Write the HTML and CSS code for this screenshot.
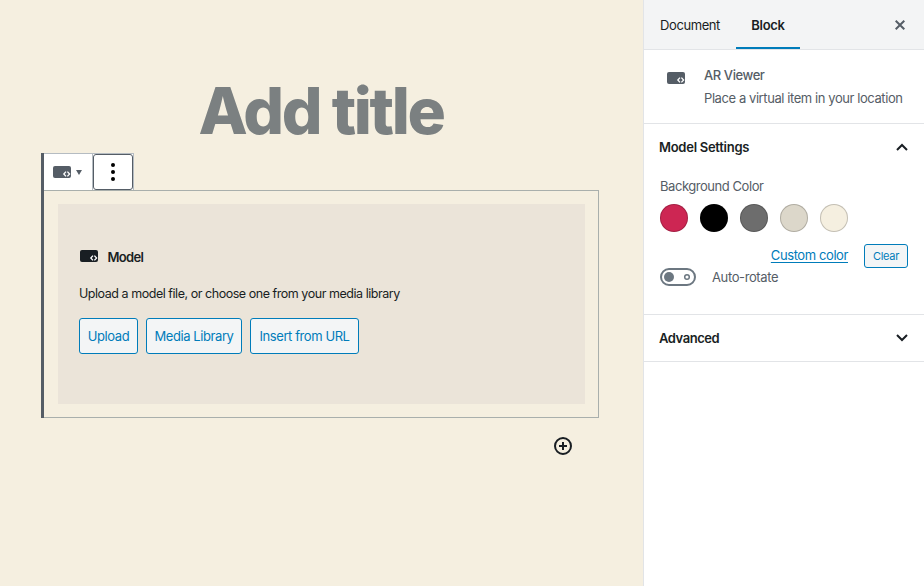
FILE: index.html
```html
<!DOCTYPE html>
<html lang="en">
<head>
<meta charset="utf-8">
<title>Add title</title>
<link rel="stylesheet" href="styles.css">
</head>
<body>
<svg class="defs" aria-hidden="true">
  <symbol id="ar" viewBox="0 0 18 12">
    <rect width="18" height="12" rx="2" fill="currentColor"/>
    <path class="code" d="M13 5.6 10.8 8l2.2 2.4M14.4 5.6 16.6 8l-2.2 2.4"/>
  </symbol>
</svg>
<div class="app">
  <main class="editor">
    <h1 class="title"><span class="t-title">Add title</span></h1>
    <section class="block">
      <div class="toolbar">
        <button class="switcher"><svg class="ar"><use href="#ar"/></svg><svg class="caret" viewBox="0 0 6 5"><path d="M0 0h6L3 5z"/></svg></button>
        <button class="more"><svg viewBox="0 0 4 18"><circle cx="2" cy="2" r="2"/><circle cx="2" cy="9" r="2"/><circle cx="2" cy="16" r="2"/></svg></button>
      </div>
      <div class="frame">
        <div class="placeholder">
          <div class="label"><svg class="ar"><use href="#ar"/></svg><span class="t-model">Model</span></div>
          <p class="help"><span class="t-help">Upload a model file, or choose one from your media library</span></p>
          <div class="actions">
            <button class="btn upload"><span class="t-upload">Upload</span></button>
            <button class="btn library"><span class="t-library">Media Library</span></button>
            <button class="btn url"><span class="t-url">Insert from URL</span></button>
          </div>
        </div>
      </div>
    </section>
    <button class="inserter"><svg viewBox="0 0 18 18"><circle cx="9" cy="9" r="8"/><path d="M9 5v8M5 9h8"/></svg></button>
  </main>
  <aside class="sidebar">
    <header class="tabs">
      <button class="tab"><span class="t-doc">Document</span></button>
      <button class="tab active"><span class="t-block">Block</span></button>
      <button class="close"><svg viewBox="0 0 10 10"><path d="m.7.7 8.6 8.6M9.3.7.7 9.3"/></svg></button>
    </header>
    <section class="card">
      <svg class="ar"><use href="#ar"/></svg>
      <div><div class="name"><span class="t-name">AR Viewer</span></div><div class="desc"><span class="t-desc">Place a virtual item in your location</span></div></div>
    </section>
    <section class="panel settings">
      <h2><span class="t-settings">Model Settings</span><svg class="chevron" viewBox="0 0 12 8"><path d="m1 7 5-5 5 5"/></svg></h2>
      <div class="field"><span class="t-bg">Background Color</span></div>
      <div class="swatches"><i class="c1"></i><i class="c2"></i><i class="c3"></i><i class="c4"></i><i class="c5"></i></div>
      <div class="custom"><a class="t-custom">Custom color</a><button class="clear"><span class="t-clear">Clear</span></button></div>
      <div class="toggle"><svg viewBox="0 0 36 18"><rect x="1" y="1" width="34" height="16" rx="8"/><circle class="knob" cx="9" cy="9" r="5"/><circle class="off" cx="27" cy="9" r="2.3"/></svg><span class="t-auto">Auto-rotate</span></div>
    </section>
    <section class="panel">
      <h2><span class="t-adv">Advanced</span><svg class="chevron" viewBox="0 0 12 8"><path d="m1 1 5 5 5-5"/></svg></h2>
    </section>
  </aside>
</div>
</body>
</html>
```
FILE: styles.css
```css
* { box-sizing: border-box; }
body { margin: 0; font: 13px/18px Inter, "Liberation Sans", sans-serif; color: #191e23; letter-spacing: -0.3px; }
button { font: inherit; letter-spacing: inherit; color: inherit; margin: 0; padding: 0; border: 0; background: none; }
svg { display: block; flex: none; }
span, a { white-space: nowrap; }
.defs { position: absolute; width: 0; height: 0; }
.app { display: flex; height: 586px; overflow: hidden; }
.editor { width: 643px; flex: none; background: #f5efe0; padding-top: 71px; }
.title { margin: 0; height: 82px; font-size: 64px; line-height: 80px; font-weight: 800; color: #7b8081; text-align: center; letter-spacing: -2.4px; padding-right: 1px; }
.block { width: 558px; height: 265px; margin-left: 41px; border-left: 3px solid #555d66; }
.ar { width: 18px; height: 12px; }
.code { fill: none; stroke: #fff; stroke-width: 1.3; }
.toolbar { display: flex; width: 90px; height: 37px; background: #fff; border: 1px solid #b5bcc2; border-width: 1px 1px 0 0; }
.switcher { width: 49px; display: flex; align-items: center; padding-left: 9px; gap: 5px; color: #555d66; border-right: 1px solid #b5bcc2; }
.caret { width: 6px; height: 5px; fill: #555d66; }
.more { width: 40px; height: 36px; border: 1px solid #555d66; border-radius: 3px; display: grid; place-items: center; flex: none; }
.more svg { width: 4px; height: 18px; }
.frame { height: 228px; border: 1px solid #a9afac; border-left: 0; padding: 13px 13px 13px 14px; }
.placeholder { height: 200px; background: #ebe4d9; padding: 43px 21px 0; }
.label { display: flex; align-items: center; gap: 9.5px; height: 20px; padding-left: 1px; font-weight: 600; }
.label .ar { margin-bottom: 2px; }
.t-model { letter-spacing: -0.65px; }
.help { margin: 18px 0 14px; height: 19px; font-size: 12.5px; letter-spacing: -0.46px; }
.actions { display: flex; gap: 8px; }
.btn { height: 36px; border: 1px solid #007cba; border-radius: 3px; color: #007cba; background: #f3f5f6; letter-spacing: -0.42px; }
.upload { width: 59px; }
.library { width: 96px; }
.url { width: 109px; }
.inserter { display: block; margin: 19px 0 0 554px; }
.inserter svg { width: 18px; height: 18px; fill: none; stroke: #191e23; stroke-width: 2; }
.sidebar { flex: 1; background: #fff; border-left: 1px solid #e2e4e7; color: #555d66; }
.tabs { height: 50px; display: flex; background: #f3f4f5; border-bottom: 1px solid #e2e4e7; color: #191e23; }
.tab { width: 92px; height: 49px; padding-top: 0; letter-spacing: -0.42px; }
.tab.active { width: 64px; border-bottom: 2px solid #007cba; padding-top: 2px; font-weight: 600; letter-spacing: -0.3px; }
.close { margin: 20px 19px 0 auto; height: 10px; }
.close svg { width: 10px; height: 10px; fill: none; stroke: #555d66; stroke-width: 2; }
.card { height: 74px; border-bottom: 1px solid #e2e4e7; display: flex; padding: 16px 0 0 23px; }
.card .ar { margin: 6px 19px 0 0; }
.name { height: 23px; font-weight: 500; letter-spacing: -0.42px; }
.desc { letter-spacing: -0.42px; }
.panel { border-bottom: 1px solid #e2e4e7; padding: 0 16px; height: 47px; }
.settings { height: 191px; }
h2 { margin: 0 0 0 -1px; height: 46px; display: flex; align-items: center; justify-content: space-between; font-size: 13px; font-weight: 600; color: #191e23; }
.t-settings { letter-spacing: -0.27px; }
.t-adv { letter-spacing: -0.45px; }
.chevron { width: 12px; height: 8px; fill: none; stroke: #191e23; stroke-width: 2; }
.field { margin-top: 7px; height: 27px; letter-spacing: -0.45px; }
.swatches { display: flex; gap: 12px; }
.swatches i { width: 28px; height: 28px; border-radius: 50%; border: 1px solid rgba(0,0,0,.2); }
.c1 { background: #cd2653; }
.c2 { background: #000; }
.c3 { background: #6d6d6d; }
.c4 { background: #dcd7ca; }
.c5 { background: #f5efe0; }
.custom { margin-top: 12px; height: 24px; display: flex; justify-content: flex-end; gap: 16px; align-items: center; color: #007cba; }
.custom a { text-decoration: underline; text-underline-offset: 2px; letter-spacing: -0.41px; padding-bottom: 2px; }
.clear { width: 44px; height: 24px; border: 1px solid #007cba; border-radius: 3px; background: #f3f5f6; font-size: 11px; line-height: 16px; }
.toggle { display: flex; align-items: center; gap: 16px; }
.t-auto { letter-spacing: -0.38px; }
.toggle svg { width: 36px; height: 18px; fill: none; stroke: #6c7781; stroke-width: 2; }
.toggle .knob { fill: #6c7781; stroke: none; }
.toggle .off { stroke-width: 1.5; }
```
